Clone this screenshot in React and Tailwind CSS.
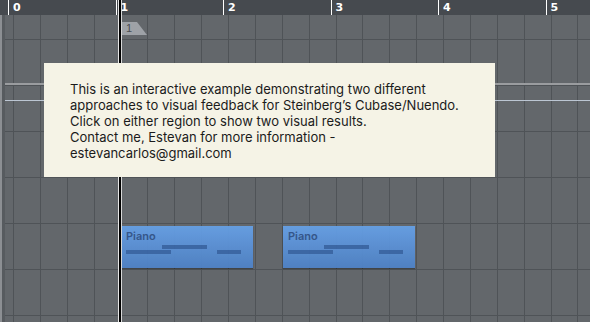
import React from "react";

const bars = [0, 1, 2, 3, 4, 5];
const cols = Array.from({ length: 22 });
const rows = Array.from({ length: 7 });

function Region({ left }) {
  return (
    <div
      className="absolute top-[226px] h-[42px] w-[132px] bg-[linear-gradient(to_bottom,#66a0e6,#4f82c6)] opacity-95 shadow-[0_1px_1px_rgba(0,0,0,0.35)]"
      style={{ left }}
    >
      <div className="pl-[5px] pt-[4px] text-[11px] leading-[13px] font-semibold text-[#33568c] font-['Inter',sans-serif]">
        Piano
      </div>
      <div className="absolute left-[5px] top-[24px] h-[4px] w-[45px] bg-[#3a67a8]" />
      <div className="absolute left-[41px] top-[19px] h-[4px] w-[45px] bg-[#3a67a8]" />
      <div className="absolute left-[96px] top-[24px] h-[4px] w-[24px] bg-[#3a67a8]" />
    </div>
  );
}

export default function App() {
  return (
    <div className="relative w-[590px] h-[322px] overflow-hidden bg-[#63676b] flex flex-col font-['Inter',sans-serif]">
      {/* Ruler */}
      <div className="h-[15px] flex bg-[#464a4f] shrink-0">
        <div className="w-[5px] bg-[#5a5e62]" />
        <div className="flex pl-[8px]">
          {bars.map((b) => (
            <div
              key={b}
              className="w-[107.5px] shrink-0 border-l border-white pl-[4px] pt-[2px] text-[11px] leading-[11px] font-bold text-white font-['DejaVu_Sans',sans-serif]"
            >
              {b}
            </div>
          ))}
        </div>
      </div>

      {/* Grid area */}
      <div className="relative flex-1 flex">
        <div className="flex w-[5px] shrink-0">
          <div className="w-[2px] bg-[#8c8f93]" />
          <div className="w-[3px] bg-[#575b5f]" />
        </div>
        <div className="flex pl-[8px]">
          {cols.map((_, i) => (
            <div key={i} className="w-[26.875px] shrink-0 border-l border-[#4f5357]" />
          ))}
        </div>
        {/* row lines */}
        <div className="absolute left-[5px] right-0 top-0 bottom-0 flex flex-col">
          <div className="h-[25px] shrink-0 border-b border-[#4f5357] relative">
            <div className="absolute left-[117px] top-[7px] h-[13px] w-[25px] bg-[#9ea2a7] [clip-path:polygon(0_0,15px_0,100%_100%,0_100%)] pl-[4px] text-[11px] leading-[13px] text-[#4a4d52] font-['Liberation_Sans',sans-serif]">
              1
            </div>
          </div>
          {rows.map((_, i) => (
            <div key={i} className="h-[46px] shrink-0 border-b border-[#4f5357]" />
          ))}
        </div>
      </div>

      {/* track lines */}
      <div className="absolute left-[5px] right-0 top-[83px] h-[2px] bg-[#9a9c9f]" />
      <div className="absolute left-[5px] right-0 top-[100px] h-px bg-[#bcc6d3]" />

      {/* Regions */}
      <Region left={121} />
      <Region left={283} />

      {/* Playhead */}
      <div className="absolute left-[118px] top-0 bottom-0 flex">
        <div className="w-px bg-[#e6e6e6]" />
        <div className="w-[2px] bg-black" />
        <div className="w-px bg-[#d8d8d8]" />
      </div>

      {/* Info box */}
      <div className="absolute left-[44px] top-[63px] w-[451px] h-[114px] bg-[#f5f3e6] pl-[26px] pt-[18px] text-[13px] leading-[16px] text-[#1b1b1b]">
        <p>This is an interactive example demonstrating two different</p>
        <p>approaches to visual feedback for Steinberg’s Cubase/Nuendo.</p>
        <p>Click on either region to show two visual results.</p>
        <p>Contact me, Estevan for more information -</p>
        <p>estevancarlos@gmail.com</p>
      </div>
    </div>
  );
}
